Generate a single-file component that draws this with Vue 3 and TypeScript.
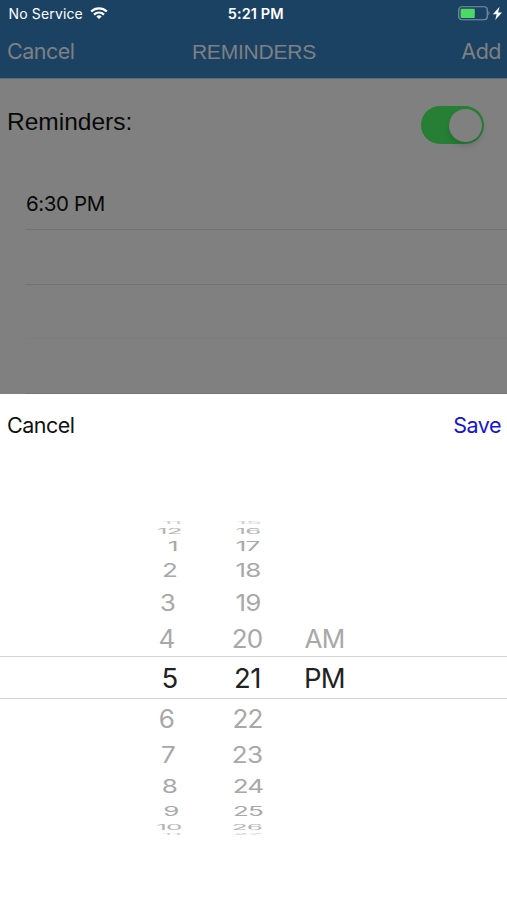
<script setup lang="ts">
interface WheelRow {
  hour: string
  minute: string
  period: string
  height: number
  scale: number
  hourShift: number
  minuteShift: number
  tone: string
}

const rows: WheelRow[] = [
  { hour: '11', minute: '15', period: '', height: 6, scale: 0.12, hourShift: 2, minuteShift: 1, tone: 'edge' },
  { hour: '12', minute: '16', period: '', height: 9, scale: 0.29, hourShift: 0, minuteShift: 0.5, tone: 'far' },
  { hour: '1', minute: '17', period: '', height: 22, scale: 0.51, hourShift: 3.5, minuteShift: 0, tone: 'dim' },
  { hour: '2', minute: '18', period: '', height: 28, scale: 0.72, hourShift: 0, minuteShift: 0.5, tone: 'dim' },
  { hour: '3', minute: '19', period: '', height: 35, scale: 0.87, hourShift: -2, minuteShift: 0.5, tone: 'dim' },
  { hour: '4', minute: '20', period: 'AM', height: 37, scale: 0.98, hourShift: -3, minuteShift: -0.5, tone: 'dim' },
  { hour: '5', minute: '21', period: 'PM', height: 43, scale: 1, hourShift: 0, minuteShift: 0, tone: 'current' },
  { hour: '6', minute: '22', period: '', height: 37, scale: 0.98, hourShift: -3, minuteShift: 0, tone: 'dim' },
  { hour: '7', minute: '23', period: '', height: 36, scale: 0.87, hourShift: -1.5, minuteShift: -0.5, tone: 'dim' },
  { hour: '8', minute: '24', period: '', height: 28, scale: 0.7, hourShift: 0, minuteShift: 0.5, tone: 'dim' },
  { hour: '9', minute: '25', period: '', height: 20, scale: 0.51, hourShift: 1.5, minuteShift: 0.5, tone: 'dim' },
  { hour: '10', minute: '26', period: '', height: 11, scale: 0.28, hourShift: -0.5, minuteShift: -0.5, tone: 'far' },
  { hour: '11', minute: '27', period: '', height: 3, scale: 0.1, hourShift: 2, minuteShift: 0, tone: 'edge' },
]

const place = (scale: number, shift: number) => ({
  transform: `translateX(${shift}px) scaleY(${scale})`,
})
</script>

<template>
  <div class="screen">
    <header class="top">
      <div class="status">
        <div class="carrier">
          <span>No Service</span>
          <svg width="18" height="13" viewBox="0 0 18 13" fill="none" stroke="#fff">
            <path d="M1.2 4.5C5.7.3 12.3.3 16.8 4.5" stroke-width="2.3" />
            <path d="M4 7.6C7 4.8 11 4.8 14 7.6" stroke-width="2.2" />
            <path d="M9 12.1 6.3 9.4C7.8 8 10.2 8 11.7 9.4Z" fill="#fff" stroke="none" />
          </svg>
        </div>
        <strong class="clock">5:21 PM</strong>
        <svg class="battery" width="45" height="15" viewBox="0 0 45 15">
          <rect x=".75" y=".75" width="28.5" height="13" rx="3" fill="none" stroke="#7892a5" stroke-width="1.2" />
          <rect x="2.6" y="2.7" width="14.2" height="9.2" rx="1" fill="#4cd964" />
          <path d="M30.5 5q2 2.2 0 4.5Z" fill="#7892a5" />
          <path d="M41.6.8 34.8 8.2h3.9L37.2 14l6.8-7.5h-3.9Z" fill="#fff" />
        </svg>
      </div>
      <nav class="nav">
        <span class="action">Cancel</span>
        <span class="title">REMINDERS</span>
        <span class="action add">Add</span>
      </nav>
    </header>

    <main class="page">
      <div class="setting">
        <span class="label">Reminders:</span>
        <span class="toggle"><i class="knob"></i></span>
      </div>
      <ul class="list">
        <li>6:30 PM</li>
        <li></li>
        <li class="faint"></li>
        <li></li>
      </ul>
    </main>

    <section class="sheet">
      <div class="sheet-bar">
        <span class="action">Cancel</span>
        <span class="action save">Save</span>
      </div>
      <div class="wheel">
        <div
          v-for="(row, index) in rows"
          :key="index"
          class="row"
          :class="row.tone"
          :style="{ height: row.height + 'px' }"
        >
          <span class="hour" :style="place(row.scale, row.hourShift)">{{ row.hour }}</span>
          <span class="minute" :style="place(row.scale, row.minuteShift)">{{ row.minute }}</span>
          <span class="period" :style="place(row.scale, 0)">{{ row.period }}</span>
        </div>
      </div>
    </section>
  </div>
</template>

<style>
body {
  margin: 0;
}
</style>

<style scoped>
.screen {
  width: 507px;
  height: 900px;
  overflow: hidden;
  display: flex;
  flex-direction: column;
  background: #fff;
  font-family: Inter, 'Liberation Sans', sans-serif;
}
.top {
  height: 78px;
  background: #1c4263;
  border-bottom: 1px solid #606b74;
}
.status {
  height: 27px;
  display: grid;
  grid-template-columns: 1fr auto 1fr;
  align-items: center;
  color: #fff;
  font-size: 14px;
  padding: 0 4px 0 8.5px;
}
.carrier {
  display: flex;
  align-items: center;
  gap: 7px;
  letter-spacing: 0.15px;
}
.clock {
  font-weight: 600;
  font-size: 14.5px;
  letter-spacing: 0.1px;
}
.battery {
  justify-self: end;
}
.nav {
  height: 50px;
  display: grid;
  grid-template-columns: 1fr auto 1fr;
  align-items: center;
  padding: 0 6px 0 7px;
  color: #7e8082;
}
.action {
  font-size: 21.5px;
  letter-spacing: -0.5px;
}
.nav .action {
  padding-bottom: 2px;
}
.add {
  text-align: right;
}
.title {
  font-family: 'Liberation Sans', sans-serif;
  font-size: 21px;
  letter-spacing: -0.2px;
}
.page {
  height: 315px;
  background: #808080;
  color: #080808;
  overflow: hidden;
}
.setting {
  height: 97px;
  display: flex;
  align-items: center;
  justify-content: space-between;
  padding: 0 23px 0 7px;
}
.label {
  font-family: 'Liberation Sans', sans-serif;
  font-size: 24.5px;
  padding-bottom: 12px;
}
.toggle {
  width: 63px;
  height: 38px;
  margin-bottom: 5px;
  border-radius: 19px;
  background: #267f34;
  display: flex;
  align-items: center;
  justify-content: flex-end;
}
.knob {
  width: 33px;
  height: 33px;
  margin-right: 2px;
  border-radius: 50%;
  background: #808080;
  box-shadow: 0 4px 6px rgba(0, 0, 0, 0.14);
}
.list {
  list-style: none;
  margin: 0;
  padding: 0 0 0 26px;
  font-size: 20.5px;
  letter-spacing: -0.4px;
}
.list li {
  height: 54.4px;
  box-sizing: border-box;
  border-bottom: 1px solid #737373;
  display: flex;
  align-items: center;
}
.list li:first-child {
  padding-top: 1px;
}
.list .faint {
  border-bottom-color: #7c7c7c;
}
.sheet {
  flex: 1;
  background: #fff;
}
.sheet-bar {
  height: 62px;
  display: flex;
  align-items: center;
  justify-content: space-between;
  padding: 0 6px 0 7px;
  color: #111;
}
.save {
  color: #1414d4;
}
.wheel {
  padding-top: 63px;
}
.row {
  box-sizing: border-box;
  display: grid;
  grid-template-columns: 40px 40px 46px;
  column-gap: 38px;
  align-items: center;
  padding-left: 149.5px;
  font-size: 26px;
  letter-spacing: -0.8px;
  line-height: 34px;
  text-align: center;
  white-space: nowrap;
  color: #a8a8a8;
}
.row span {
  display: block;
  height: 34px;
  margin: -16px 0 -18px;
}
.row .period {
  margin-left: -8px;
}
.row.current {
  color: #222;
  font-size: 27.5px;
  letter-spacing: -0.6px;
  border-top: 1px solid #d4d4d4;
  border-bottom: 1px solid #d4d4d4;
}
.row.current span {
  margin-top: -17px;
  margin-bottom: -17px;
}
.row.far {
  color: #b4b4b4;
}
.row.edge {
  color: #d0d0d0;
}
</style>
